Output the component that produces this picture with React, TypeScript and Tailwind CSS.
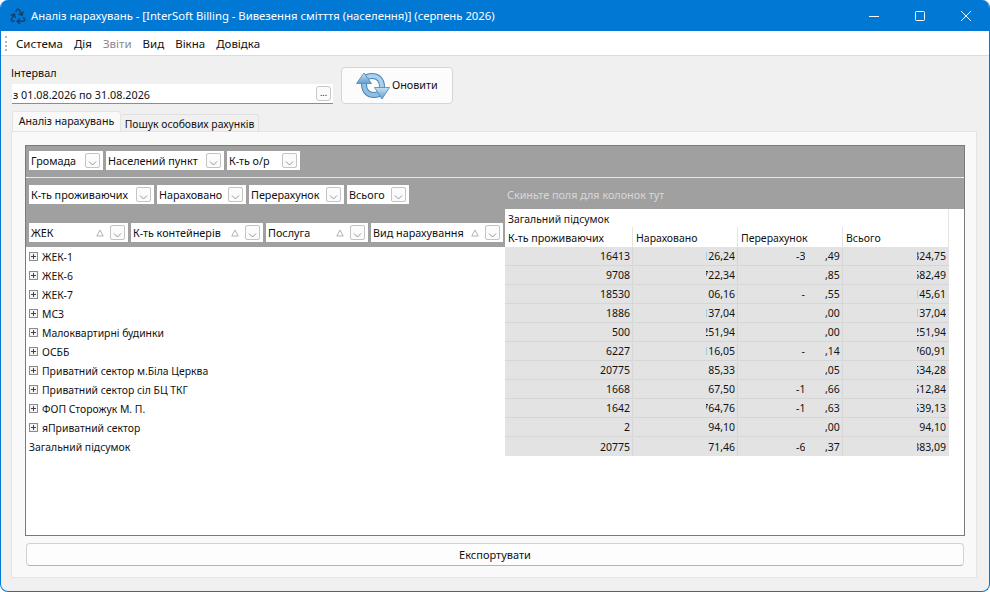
import { Recycle } from "lucide-react";

const menu = ["Система", "Дія", "Звіти", "Вид", "Вікна", "Довідка"];

const rowNames = [
  "ЖЕК-1",
  "ЖЕК-6",
  "ЖЕК-7",
  "МСЗ",
  "Малоквартирні будинки",
  "ОСББ",
  "Приватний сектор м.Біла Церква",
  "Приватний сектор сіл БЦ ТКГ",
  "ФОП Сторожук М. П.",
  "яПриватний сектор",
];

// the screenshot has the middle digits blanked out, so the cells clip them the same way
const rows = [
  ["16413", "126,24", "-3", ",49", "324,75"],
  ["9708", "722,34", "", ",85", "582,49"],
  ["18530", "06,16", "-", ",55", "145,61"],
  ["1886", "137,04", "", ",00", "137,04"],
  ["500", "251,94", "", ",00", "251,94"],
  ["6227", "116,05", "-", ",14", "760,91"],
  ["20775", "85,33", "", ",05", "534,28"],
  ["1668", "67,50", "-1", ",66", "512,84"],
  ["1642", "764,76", "-1", ",63", "539,13"],
  ["2", "94,10", "", ",00", "94,10"],
  ["20775", "71,46", "-6", ",37", "383,09"],
];

function DropButton() {
  return (
    <span className="flex h-[15px] w-[15px] shrink-0 items-center justify-center rounded-[2px] border border-[#c4c4c4] bg-[#fbfbfb]">
      <svg width="9" height="9" viewBox="0 0 9 9" className="mt-[3px]">
        <path d="M1 3.5 L4.5 7 L8 3.5" fill="none" stroke="#8a9aa8" strokeWidth="1" />
      </svg>
    </span>
  );
}

function SortMark() {
  return (
    <svg width="8" height="8" viewBox="0 0 8 8" className="shrink-0">
      <path d="M4 1 L7.2 7 L0.8 7 Z" fill="none" stroke="#a8a8a8" strokeWidth="0.9" />
    </svg>
  );
}

function Field({ label, width, sort }: { label: string; width: string; sort?: boolean }) {
  return (
    <div className={`flex h-[19px] items-center justify-between bg-white pl-[2px] pr-[3px] ${width}`}>
      <span className="whitespace-nowrap pt-[2px]">{label}</span>
      <span className="flex items-center gap-[6px]">
        {sort && <SortMark />}
        <DropButton />
      </span>
    </div>
  );
}

function RefreshIcon() {
  return (
    <svg width="34" height="28" viewBox="0 0 34 28" className="shrink-0">
      <defs>
        <linearGradient id="rf" x1="0" y1="0" x2="0" y2="1">
          <stop offset="0" stopColor="#c5e0f4" />
          <stop offset="1" stopColor="#5f9fd2" />
        </linearGradient>
      </defs>
      <path d="M8 12 C8 20 13 23 18 23 C22 23 24 22 26 20" fill="none" stroke="#4a83b0" strokeWidth="6" />
      <path d="M8 12 C8 20 13 23 18 23 C22 23 24 22 26 20" fill="none" stroke="#8fbfe3" strokeWidth="4" />
      <path d="M26 15 C26 7 21 4 16 4 C12 4 10 5 8 7" fill="none" stroke="#4a83b0" strokeWidth="6" />
      <path d="M26 15 C26 7 21 4 16 4 C12 4 10 5 8 7" fill="none" stroke="#a9d0ec" strokeWidth="4" />
      <path d="M8 1 L15.5 11.5 L0.5 11.5 Z" fill="url(#rf)" stroke="#4a83b0" strokeWidth="0.8" />
      <path d="M26 27 L33.5 15.5 L18.5 15.5 Z" fill="url(#rf)" stroke="#4a83b0" strokeWidth="0.8" />
    </svg>
  );
}

function ExpandBox() {
  return (
    <span className="flex h-[9px] w-[9px] shrink-0 items-center justify-center border border-[#8a8a8a] bg-[#f4f4f4]">
      <svg width="7" height="7" viewBox="0 0 7 7">
        <path d="M1 3.5 H6 M3.5 1 V6" stroke="#444" strokeWidth="1" />
      </svg>
    </span>
  );
}

export default function App() {
  return (
    <div className="flex h-[592px] w-[990px] flex-col overflow-hidden rounded-lg border-x border-b border-[#0078d4] bg-[#f0f0f0] font-['Noto_Sans','Open_Sans',sans-serif] text-[10.8px] leading-none text-[#111]">
      {/* title bar */}
      <div className="flex h-[31px] shrink-0 items-center bg-[#0078d4] pl-[8px] text-white">
        <Recycle size={18} className="text-[#17406b]" strokeWidth={2} />
        <span className="ml-[4px] flex-1 whitespace-nowrap text-[11.3px]">
          Аналіз нарахувань - [InterSoft Billing - Вивезення смітття (населення)] (серпень 2026)
        </span>
        <div className="flex items-center">
          <span className="flex w-[46px] justify-center">
            <svg width="10" height="10" viewBox="0 0 10 10"><path d="M0 5.5 H10" stroke="white" strokeWidth="1" /></svg>
          </span>
          <span className="flex w-[46px] justify-center">
            <svg width="10" height="10" viewBox="0 0 10 10"><rect x="0.5" y="0.5" width="9" height="9" rx="1" fill="none" stroke="white" strokeWidth="1" /></svg>
          </span>
          <span className="flex w-[46px] justify-center">
            <svg width="10" height="10" viewBox="0 0 10 10"><path d="M0 0 L10 10 M10 0 L0 10" stroke="white" strokeWidth="1" /></svg>
          </span>
        </div>
      </div>

      {/* menu */}
      <div className="flex h-[25px] shrink-0 items-center border-b border-[#dcdcdc] bg-white pl-[4px]">
        <span className="h-[15px] w-[2px] border-l-2 border-dotted border-[#b5b5b5]" />
        <div className="ml-[9px] flex gap-[11px] pt-[2px] text-[11.5px]">
          {menu.map((m) => (
            <span key={m} className={m === "Звіти" ? "text-[#8a8a8a]" : ""}>{m}</span>
          ))}
        </div>
      </div>

      {/* interval */}
      <div className="flex shrink-0 items-end pl-[10px] pt-[11px]">
        <div className="flex w-[322px] flex-col">
          <span className="mb-[4px] h-[13px] pt-[1px]">Інтервал</span>
          <div className="ml-px flex h-[20px] items-center justify-between border-b border-[#8c8c8c] bg-white pl-[1px] pr-[2px]">
            <span className="pt-[3px]">з 01.08.2026 по 31.08.2026</span>
            <span className="flex h-[15px] w-[15px] items-center justify-center rounded-[3px] border border-[#c8c8c8] bg-[#fbfbfb] pb-[3px] text-[9px]">...</span>
          </div>
        </div>
        <button className="ml-[8px] flex h-[37px] w-[112px] items-center rounded-[4px] border border-[#d4d4d4] bg-[#fcfcfc] pl-[14px]">
          <RefreshIcon />
          <span className="ml-[2px]">Оновити</span>
        </button>
      </div>

      {/* tabs */}
      <div className="ml-[11px] mt-[7px] flex h-[20px] shrink-0 items-end whitespace-nowrap">
        <div className="flex h-[20px] w-[109px] items-center justify-center rounded-t-[3px] border-x border-t border-[#e4e4e4] bg-[#f9f9f9] text-[10.6px]">
          Аналіз нарахувань
        </div>
        <div className="flex h-[17px] w-[138px] items-center justify-center rounded-t-[3px] border-r border-t border-[#e0e0e0] bg-[#f0f0f0] pt-[2px] text-[10.4px]">
          Пошук особових рахунків
        </div>
      </div>

      {/* tab panel */}
      <div className="mb-[13px] ml-[10px] mr-[12px] flex flex-1 flex-col border border-[#e4e4e4] bg-[#f9f9f9] pl-[13px] pr-[11px] pt-[13px]">
        {/* pivot grid */}
        <div className="flex h-[391px] shrink-0 flex-col border border-[#7a7a7a] bg-white">
          <div className="h-[31px] shrink-0 bg-[#a0a0a0] pl-[3px] pt-[5px]">
            <div className="flex gap-[3px]">
              <Field label="Громада" width="w-[74px]" />
              <Field label="Населений пункт" width="w-[118px]" />
              <Field label="К-ть о/р" width="w-[73px]" />
            </div>
          </div>
          <div className="mx-[2px] h-px shrink-0 bg-[#e6e6e6]" />
          <div className="flex h-[31px] shrink-0 bg-[#a0a0a0] pl-[3px] pt-[7px]">
            <div className="flex w-[476px] gap-[3px]">
              <Field label="К-ть проживаючих" width="w-[125px]" />
              <Field label="Нараховано" width="w-[89px]" />
              <Field label="Перерахунок" width="w-[95px]" />
              <Field label="Всього" width="w-[62px]" />
            </div>
            <span className="ml-[2px] pt-[5px] text-[#d8d8d8]">Скиньте поля для колонок тут</span>
          </div>

          <div className="flex flex-1">
            {/* row area */}
            <div className="flex w-[479px] shrink-0 flex-col text-[10.4px]">
              <div className="flex h-[38px] shrink-0 items-end gap-[3px] bg-[#a0a0a0] pb-[5px] pl-[3px] text-[10.8px]">
                <Field label="ЖЕК" width="w-[99px]" sort />
                <Field label="К-ть контейнерів" width="w-[132px]" sort />
                <Field label="Послуга" width="w-[102px]" sort />
                <Field label="Вид нарахування" width="w-[132px]" sort />
              </div>
              {rowNames.map((name) => (
                <div key={name} className="flex h-[19px] items-center gap-[4px] pl-[3px]">
                  <ExpandBox />
                  <span className="whitespace-nowrap pt-[2px]">{name}</span>
                </div>
              ))}
              <div className="flex h-[19px] items-center pl-[3px] pt-[2px]">Загальний підсумок</div>
            </div>

            {/* data area */}
            <div className="flex flex-1 flex-col text-[10.5px]">
              <div className="flex h-[38px] w-[444px] shrink-0 flex-col border-r border-[#e4e4e4]">
                <div className="flex h-[18px] items-center pl-[3px] pt-[2px] text-[10.4px]">Загальний підсумок</div>
                <div className="flex h-[20px]">
                  <div className="flex w-[128px] items-center border-r border-[#e4e4e4] pl-[3px] pt-[2px] text-[10.7px]">К-ть проживаючих</div>
                  <div className="flex w-[105px] items-center border-r border-[#e4e4e4] pl-[3px] pt-[2px]">Нараховано</div>
                  <div className="flex w-[105px] items-center border-r border-[#e4e4e4] pl-[3px] pt-[2px]">Перерахунок</div>
                  <div className="flex w-[105px] items-center pl-[3px] pt-[2px]">Всього</div>
                </div>
              </div>
              {rows.map((r, i) => (
                <div key={i} className="flex h-[19px] w-[444px] border-b border-[#d6d6d6] bg-[#e3e3e3] pt-[1px] last:border-b-0">
                  <div className="flex w-[128px] items-center justify-end border-r border-[#d6d6d6] pr-[2px]">{r[0]}</div>
                  <div className="flex w-[105px] items-center justify-end border-r border-[#d6d6d6] pr-[2px]">
                    <span className="flex w-[29px] justify-end overflow-hidden whitespace-nowrap">{r[1]}</span>
                  </div>
                  <div className="flex w-[105px] items-center justify-end border-r border-[#d6d6d6] pr-[2px]">
                    <span className={`flex w-[9px] overflow-hidden whitespace-nowrap ${r[2] === "-" ? "justify-end" : "justify-start"}`}>{r[2]}</span>
                    <span className="ml-[20px] w-[15px] whitespace-nowrap">{r[3]}</span>
                  </div>
                  <div className="flex w-[106px] items-center justify-end pr-[3px]">
                    <span className="flex w-[29px] justify-end overflow-hidden whitespace-nowrap">{r[4]}</span>
                  </div>
                </div>
              ))}
            </div>
          </div>
        </div>

        <button className="mx-px mt-[7px] flex h-[23px] shrink-0 items-center justify-center rounded-[4px] border border-[#d2d2d2] border-b-[#b4b4b4] bg-[#fdfdfd] text-[11px]">
          Експортувати
        </button>
      </div>
    </div>
  );
}
